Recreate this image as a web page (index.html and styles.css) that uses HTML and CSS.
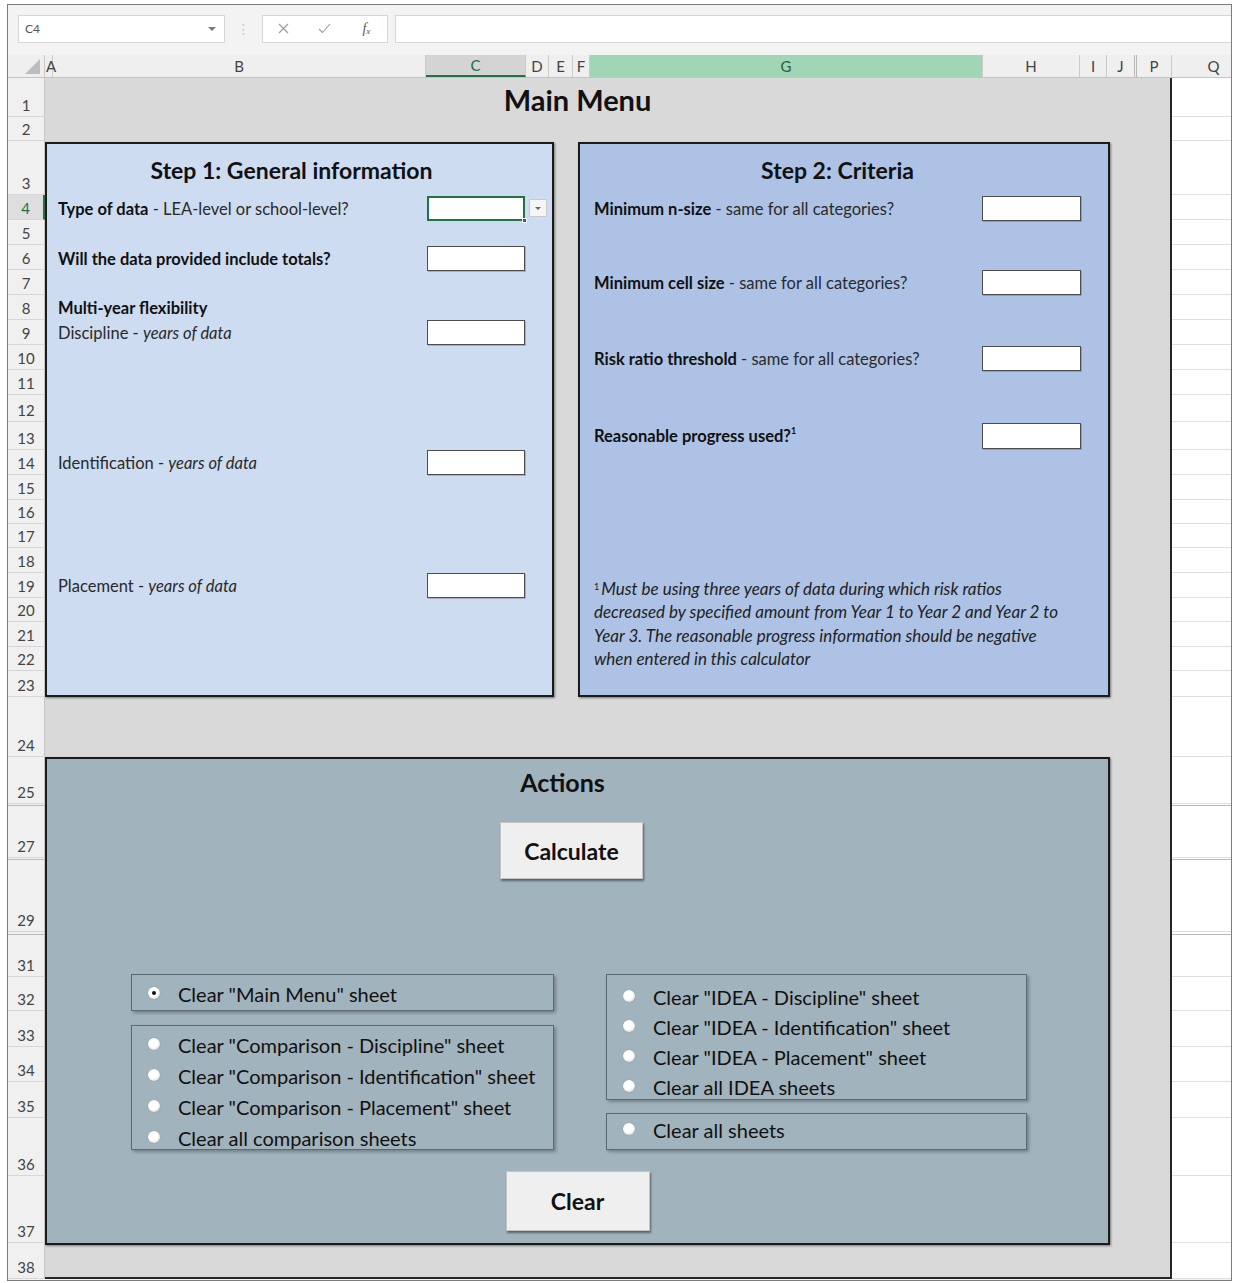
FILE: index.html
```html
<!DOCTYPE html>
<html lang="en">
<head>
<meta charset="utf-8">
<title>Main Menu</title>
<link rel="stylesheet" href="styles.css">
</head>
<body>
<div class="window">
  <div class="formula-bar">
    <div class="name-box"><span>C4</span><span class="nb-arrow"></span></div>
    <div class="fb-grip">⋮</div>
    <div class="fb-buttons">
      <span class="fb-btn"><svg width="11" height="11" viewBox="0 0 11 11"><path d="M1 1L10 10M10 1L1 10" stroke="#9a9a9a" stroke-width="1.1" fill="none"/></svg></span>
      <span class="fb-btn"><svg width="13" height="11" viewBox="0 0 13 11"><path d="M1 6L4.5 9.5L12 1" stroke="#9a9a9a" stroke-width="1.1" fill="none"/></svg></span>
      <span class="fb-btn fb-fx">f<span class="fx-sub">x</span></span>
    </div>
    <div class="fb-input"></div>
  </div>

  <div class="col-headers">
    <div class="corner"><span class="corner-tri"></span></div>
    <div class="ch ch-a">A</div>
    <div class="ch">B</div>
    <div class="ch ch-sel">C</div>
    <div class="ch">D</div>
    <div class="ch">E</div>
    <div class="ch">F</div>
    <div class="ch ch-hl">G</div>
    <div class="ch">H</div>
    <div class="ch">I</div>
    <div class="ch ch-gap">J</div>
    <div class="ch">P</div>
    <div class="ch ch-last">Q</div>
  </div>

  <div class="sheet">
    <main class="canvas">
      <h1 class="sheet-title">Main Menu</h1>

      <div class="steps">
        <section class="panel step1">
          <h2 class="panel-title">Step 1: General information</h2>
          <div class="field f-type">
            <span class="field-label"><b>Type of data</b> - LEA-level or school-level?</span>
            <span class="cell-input active"><span class="dd-btn"></span><span class="fill-handle"></span></span>
          </div>
          <div class="field f-totals">
            <span class="field-label"><b>Will the data provided include totals?</b></span>
            <span class="cell-input"></span>
          </div>
          <div class="field f-multi">
            <span class="field-label"><b>Multi-year flexibility</b></span>
          </div>
          <div class="field">
            <span class="field-label">Discipline - <i>years of data</i></span>
            <span class="cell-input"></span>
          </div>
          <div class="field f-ident">
            <span class="field-label">Identification - <i>years of data</i></span>
            <span class="cell-input"></span>
          </div>
          <div class="field f-place">
            <span class="field-label">Placement - <i>years of data</i></span>
            <span class="cell-input"></span>
          </div>
        </section>

        <section class="panel step2">
          <h2 class="panel-title">Step 2: Criteria</h2>
          <div class="field f-n">
            <span class="field-label"><b>Minimum n-size</b> - same for all categories?</span>
            <span class="cell-input wide"></span>
          </div>
          <div class="field f-cell">
            <span class="field-label"><b>Minimum cell size</b> - same for all categories?</span>
            <span class="cell-input wide"></span>
          </div>
          <div class="field f-risk">
            <span class="field-label"><b>Risk ratio threshold</b> - same for all categories?</span>
            <span class="cell-input wide"></span>
          </div>
          <div class="field f-prog">
            <span class="field-label"><b>Reasonable progress used?<sup>1</sup></b></span>
            <span class="cell-input wide tall"></span>
          </div>
          <p class="footnote"><sup>1</sup>Must be using three years of data during which risk ratios<br>decreased by specified amount from Year 1 to Year 2 and Year 2 to<br>Year 3. The reasonable progress information should be negative<br>when entered in this calculator</p>
        </section>
      </div>

      <section class="actions">
        <h2 class="actions-title">Actions</h2>
        <button class="btn btn-calc" type="button">Calculate</button>

        <div class="radio-area">
          <div class="radio-col col-left">
            <div class="radio-group g-a">
              <label class="radio"><span class="radio-dot checked"></span>Clear "Main Menu" sheet</label>
            </div>
            <div class="radio-group g-b">
              <label class="radio"><span class="radio-dot"></span>Clear "Comparison - Discipline" sheet</label>
              <label class="radio"><span class="radio-dot"></span>Clear "Comparison - Identification" sheet</label>
              <label class="radio"><span class="radio-dot"></span>Clear "Comparison - Placement" sheet</label>
              <label class="radio"><span class="radio-dot"></span>Clear all comparison sheets</label>
            </div>
          </div>
          <div class="radio-col col-right">
            <div class="radio-group g-c">
              <label class="radio"><span class="radio-dot"></span>Clear "IDEA - Discipline" sheet</label>
              <label class="radio"><span class="radio-dot"></span>Clear "IDEA - Identification" sheet</label>
              <label class="radio"><span class="radio-dot"></span>Clear "IDEA - Placement" sheet</label>
              <label class="radio"><span class="radio-dot"></span>Clear all IDEA sheets</label>
            </div>
            <div class="radio-group g-d">
              <label class="radio"><span class="radio-dot"></span>Clear all sheets</label>
            </div>
          </div>
        </div>

        <button class="btn btn-clear" type="button">Clear</button>
      </section>
    </main>

    <div class="rh">1</div><div class="qc"></div>
    <div class="rh">2</div><div class="qc"></div>
    <div class="rh">3</div><div class="qc"></div>
    <div class="rh sel">4</div><div class="qc"></div>
    <div class="rh">5</div><div class="qc"></div>
    <div class="rh">6</div><div class="qc"></div>
    <div class="rh">7</div><div class="qc"></div>
    <div class="rh">8</div><div class="qc"></div>
    <div class="rh">9</div><div class="qc"></div>
    <div class="rh">10</div><div class="qc"></div>
    <div class="rh">11</div><div class="qc"></div>
    <div class="rh">12</div><div class="qc"></div>
    <div class="rh">13</div><div class="qc"></div>
    <div class="rh">14</div><div class="qc"></div>
    <div class="rh">15</div><div class="qc"></div>
    <div class="rh">16</div><div class="qc"></div>
    <div class="rh">17</div><div class="qc"></div>
    <div class="rh">18</div><div class="qc"></div>
    <div class="rh">19</div><div class="qc"></div>
    <div class="rh">20</div><div class="qc"></div>
    <div class="rh">21</div><div class="qc"></div>
    <div class="rh">22</div><div class="qc"></div>
    <div class="rh">23</div><div class="qc"></div>
    <div class="rh">24</div><div class="qc"></div>
    <div class="rh">25</div><div class="qc"></div>
    <div class="rh hid"></div><div class="qc hid"></div>
    <div class="rh">27</div><div class="qc"></div>
    <div class="rh hid"></div><div class="qc hid"></div>
    <div class="rh">29</div><div class="qc"></div>
    <div class="rh hid"></div><div class="qc hid"></div>
    <div class="rh">31</div><div class="qc"></div>
    <div class="rh">32</div><div class="qc"></div>
    <div class="rh">33</div><div class="qc"></div>
    <div class="rh">34</div><div class="qc"></div>
    <div class="rh">35</div><div class="qc"></div>
    <div class="rh">36</div><div class="qc"></div>
    <div class="rh">37</div><div class="qc"></div>
    <div class="rh">38</div><div class="qc"></div>
  </div>
</div>
</body>
</html>
```

FILE: styles.css
```css
* {
  box-sizing: border-box;
}

body {
  margin: 0;
  background: #ffffff;
  font-family: Lato, "Open Sans", "DejaVu Sans", sans-serif;
  color: #111;
}

h1, h2, p {
  margin: 0;
}

/* ---------- window frame ---------- */
.window {
  margin: 4px 0 0 7px;
  width: 1225px;
  height: 1277px;
  border: 1px solid #7c7c7c;
  background: #f3f3f3;
  overflow: hidden;
  display: flex;
  flex-direction: column;
}

/* ---------- formula bar ---------- */
.formula-bar {
  flex: none;
  height: 45px;
  display: flex;
  align-items: center;
  padding: 2px 0 0 10px;
}

.name-box {
  width: 207px;
  height: 28px;
  background: #fff;
  border: 1px solid #d6d6d6;
  display: flex;
  align-items: center;
  justify-content: space-between;
  padding: 0 8px 0 6px;
  font-size: 12px;
  color: #555;
}

.nb-arrow {
  width: 0;
  height: 0;
  border-left: 4px solid transparent;
  border-right: 4px solid transparent;
  border-top: 4px solid #7a7a7a;
}

.fb-grip {
  width: 37px;
  text-align: center;
  color: #c4c4c4;
  font-size: 14px;
}

.fb-buttons {
  width: 126px;
  height: 28px;
  background: #fff;
  border: 1px solid #d6d6d6;
  display: flex;
  align-items: center;
}

.fb-btn {
  width: 42px;
  display: flex;
  justify-content: center;
  align-items: center;
}

.fb-fx {
  font-family: "Liberation Serif", serif;
  font-style: italic;
  font-size: 14px;
  color: #555;
}

.fx-sub {
  font-size: 9px;
  position: relative;
  top: 2px;
}

.fb-input {
  flex: 1;
  height: 28px;
  margin-left: 7px;
  background: #fff;
  border: 1px solid #d6d6d6;
  border-right: none;
}

/* ---------- column headers ---------- */
.col-headers {
  flex: none;
  margin-top: 5px;
  height: 23px;
  display: grid;
  grid-template-columns: 37px 8px 373px 100px 23px 24px 17px 393px 97px 27px 30px 35px 1fr;
  background: #efefef;
  border-bottom: 1px solid #c3c3c3;
}

.corner {
  border-right: 1px solid #c9c9c9;
  display: flex;
  justify-content: flex-end;
  align-items: flex-end;
  padding: 0 4px 3px 0;
}

.corner-tri {
  width: 0;
  height: 0;
  border-left: 15px solid transparent;
  border-bottom: 15px solid #bdbdbd;
}

.ch {
  border-right: 1px solid #cbcbcb;
  display: flex;
  align-items: center;
  justify-content: center;
  font-size: 15px;
  color: #444;
  white-space: nowrap;
}

.ch-a {
  justify-content: flex-start;
  padding-left: 1px;
  overflow: visible;
}

.ch-sel {
  background: #d4d4d4;
  border-bottom: 2px solid #217346;
  color: #1f6b42;
}

.ch-hl {
  background: #a0d6b6;
  color: #2a5c42;
}

.ch-gap {
  border-right: 3px double #b8b8b8;
}

.ch-last {
  border-right: none;
  padding-left: 24px;
}

/* ---------- sheet grid ---------- */
.sheet {
  flex: none;
  height: 1201px;
  display: grid;
  grid-template-columns: 37px 1127px 1fr;
  grid-template-rows:
    39px 24px 54px repeat(8, 25px) 27px 28px 25px 25px 24px 24px 25px 25px 24px 25px 24px 26px
    60px 47px 2px 52px 2px 72px 3px 42px 34px 36px 35px 36px 58px 67px 36px;
}

.rh {
  grid-column: 1;
  background: #f0f0f0;
  border-bottom: 1px solid #d6d6d6;
  border-right: 1px solid #c6c6c6;
  display: flex;
  align-items: flex-end;
  justify-content: center;
  padding-bottom: 3px;
  font-size: 15px;
  line-height: 16px;
  color: #444;
  overflow: hidden;
}

.rh.sel {
  background: #dedede;
  color: #217346;
  border-right: 2px solid #217346;
}

.rh.hid,
.qc.hid {
  padding: 0;
  border-bottom: 1px solid #b9b9b9;
}

.qc {
  grid-column: 3;
  background: #fff;
  border-bottom: 1px solid #e0e0e0;
}

/* ---------- drawing area ---------- */
.canvas {
  grid-column: 2;
  grid-row: 1 / -1;
  background: #d9d9d9;
  border-right: 2px solid #262626;
  border-bottom: 2px solid #262626;
  padding-right: 60px;
  display: flex;
  flex-direction: column;
}

.sheet-title {
  height: 64px;
  padding-top: 6px;
  line-height: 32px;
  text-align: center;
  font-size: 29px;
  font-weight: 700;
}

.steps {
  display: flex;
  gap: 24px;
  height: 555px;
}

.panel {
  border: 2px solid #1b1b1b;
  box-shadow: 1px 1px 2px rgba(0, 0, 0, 0.45);
  display: flex;
  flex-direction: column;
}

.step1 {
  width: 509px;
  background: #cddcf1;
  padding: 0 27px 0 11px;
}

.step2 {
  width: 532px;
  background: #adc2e5;
  padding: 0 27px 0 14px;
}

.panel-title {
  padding-top: 13px;
  line-height: 26px;
  font-size: 23px;
  font-weight: 700;
  text-align: center;
}

.field {
  display: flex;
  align-items: center;
  height: 25px;
  font-size: 16.5px;
  color: #2a2a2a;
  white-space: nowrap;
}

.field b {
  color: #111;
}

.field sup {
  font-size: 9px;
  vertical-align: top;
  position: relative;
  top: -1px;
}

.field-label {
  flex: 1;
}

.cell-input {
  width: 98px;
  height: 25px;
  background: #fff;
  border: 1px solid #4d4d4d;
  box-shadow: 1px 1px 0 rgba(90, 90, 90, 0.35);
  position: relative;
}

.cell-input.wide {
  width: 99px;
}

.cell-input.tall {
  height: 26px;
}

.cell-input.active {
  border: 2px solid #217346;
  box-shadow: none;
}

.dd-btn {
  position: absolute;
  left: 100px;
  top: 1px;
  width: 18px;
  height: 18px;
  background: #f5f5f5;
  border: 1px solid #c9c9c9;
  display: flex;
  align-items: center;
  justify-content: center;
}

.dd-btn::after {
  content: "";
  border-left: 3px solid transparent;
  border-right: 3px solid transparent;
  border-top: 3px solid #666;
}

.fill-handle {
  position: absolute;
  right: -4px;
  bottom: -4px;
  width: 5px;
  height: 5px;
  background: #217346;
  border: 1px solid #fff;
}

/* vertical rhythm of the step panels */
.f-type,
.f-n {
  margin-top: 13px;
}

.f-totals {
  margin-top: 25px;
}

.f-multi {
  margin-top: 25px;
  height: 24px;
}

.f-ident {
  margin-top: 105px;
}

.f-place {
  margin-top: 98px;
}

.f-cell {
  margin-top: 49px;
}

.f-risk {
  margin-top: 51px;
}

.f-prog {
  margin-top: 52px;
  height: 26px;
}

.footnote {
  margin-top: 128px;
  font-size: 17px;
  font-style: italic;
  line-height: 23.3px;
  white-space: nowrap;
  color: #222;
}

.footnote sup {
  font-size: 9px;
  font-style: normal;
  vertical-align: top;
  position: relative;
  top: -2px;
  margin-right: 2px;
}

/* ---------- actions ---------- */
.actions {
  margin-top: 60px;
  height: 488px;
  background: #a1b3bc;
  border: 2px solid #1b1b1b;
  box-shadow: 1px 1px 2px rgba(0, 0, 0, 0.45);
  display: flex;
  flex-direction: column;
  align-items: center;
}

.actions-title {
  padding: 9px 30px 0 0;
  line-height: 28px;
  font-size: 25px;
  font-weight: 700;
}

.btn {
  background: #efefef;
  border: 1px solid #c4c4c4;
  box-shadow: 1px 2px 2px rgba(0, 0, 0, 0.45);
  font-family: inherit;
  font-size: 23px;
  font-weight: 700;
  color: #111;
  padding: 0;
}

.btn-calc {
  width: 143px;
  height: 57px;
  margin-top: 26px;
  margin-right: 12px;
}

.btn-clear {
  width: 144px;
  height: 60px;
  margin-top: 21px;
}

.radio-area {
  align-self: stretch;
  margin-top: 95px;
  height: 176px;
  padding-left: 84px;
  display: flex;
  gap: 52px;
}

.radio-col {
  display: flex;
  flex-direction: column;
}

.col-left {
  width: 423px;
  gap: 14px;
}

.col-right {
  width: 421px;
  gap: 13px;
}

.radio-group {
  border: 1px solid #5c6b72;
  box-shadow: 2px 2px 3px rgba(0, 0, 0, 0.28);
}

.g-a {
  height: 37px;
  padding-top: 4px;
}

.g-b {
  height: 125px;
  padding-top: 3px;
}

.g-c {
  height: 126px;
  padding-top: 7px;
}

.g-d {
  height: 37px;
  padding-top: 1px;
}

.radio {
  display: flex;
  align-items: center;
  height: 30px;
  padding-left: 16px;
  font-size: 20px;
  color: #111;
  white-space: nowrap;
}

.g-b .radio {
  height: 31px;
}

.radio-dot {
  width: 12px;
  height: 12px;
  flex: none;
  margin-right: 18px;
  border-radius: 50%;
  background: radial-gradient(circle at 45% 40%, #ffffff 0 45%, #e4e4e4 70%, #b8b8b8 100%);
  box-shadow: 0 0 1px rgba(0, 0, 0, 0.35);
  position: relative;
  top: -1px;
}

.radio-dot.checked::after {
  content: "";
  position: absolute;
  left: 4px;
  top: 4px;
  width: 4px;
  height: 4px;
  border-radius: 50%;
  background: #111;
}
```
